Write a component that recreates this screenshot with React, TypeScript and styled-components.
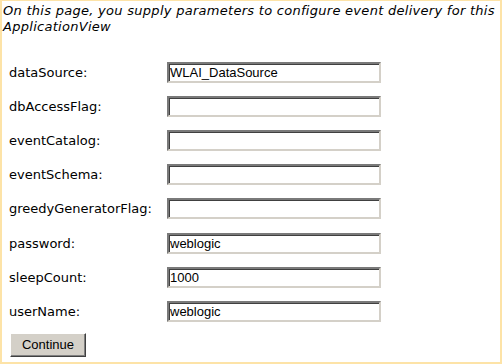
import React from "react";
import styled, { createGlobalStyle } from "styled-components";

const Global = createGlobalStyle`
  html, body { margin: 0; padding: 0; background: #fff; }
  * { box-sizing: border-box; }
`;

const Frame = styled.div`
  width: 502px;
  height: 364px;
  border: 2px solid #fde3a7;
  border-top-width: 1px;
  background: #fff;
  font-family: "DejaVu Sans", Verdana, sans-serif;
  color: #000;
  overflow: hidden;
`;

const Intro = styled.p`
  margin: 0;
  padding: 2px 0 0 1px;
  font-size: 13px;
  line-height: 16px;
  font-style: italic;
  letter-spacing: 0.28px;
`;

const Form = styled.form`
  display: flex;
  flex-direction: column;
  padding: 20px 0 0 7px;
`;

const Row = styled.div`
  display: grid;
  grid-template-columns: 158px 214px;
  align-items: center;
  height: 34.2px;
`;

const Label = styled.label`
  font-size: 13px;
`;

const Field = styled.input`
  width: 214px;
  height: 21px;
  padding: 1px 1px 0;
  border: 2px solid;
  border-color: #7a7a7a #d4d0c8 #d4d0c8 #7a7a7a;
  box-shadow: inset 1px 1px 0 #404040;
  font-family: "Liberation Sans", Arial, sans-serif;
  font-size: 13px;
  color: #000;
  background: #fff;
  outline: none;
`;

const Button = styled.button`
  margin-top: 4px;
  margin-left: 1px;
  width: 76px;
  height: 24px;
  background: #d4d0c8;
  border: 1px solid;
  border-color: #fff #404040 #404040 #fff;
  box-shadow: inset -1px -1px 0 #808080;
  font-family: "Liberation Sans", Arial, sans-serif;
  font-size: 13px;
  color: #000;
  padding: 0 0 1px;
`;

const fields: [string, string][] = [
  ["dataSource", "WLAI_DataSource"],
  ["dbAccessFlag", ""],
  ["eventCatalog", ""],
  ["eventSchema", ""],
  ["greedyGeneratorFlag", ""],
  ["password", "weblogic"],
  ["sleepCount", "1000"],
  ["userName", "weblogic"],
];

export default function App() {
  return (
    <>
      <Global />
      <Frame>
        <Intro>
          On this page, you supply parameters to configure event delivery for this ApplicationView
        </Intro>
        <Form onSubmit={(e) => e.preventDefault()}>
          {fields.map(([name, value]) => (
            <Row key={name}>
              <Label htmlFor={name}>{name}:</Label>
              <Field id={name} defaultValue={value} />
            </Row>
          ))}
          <div>
            <Button type="submit">Continue</Button>
          </div>
        </Form>
      </Frame>
    </>
  );
}
